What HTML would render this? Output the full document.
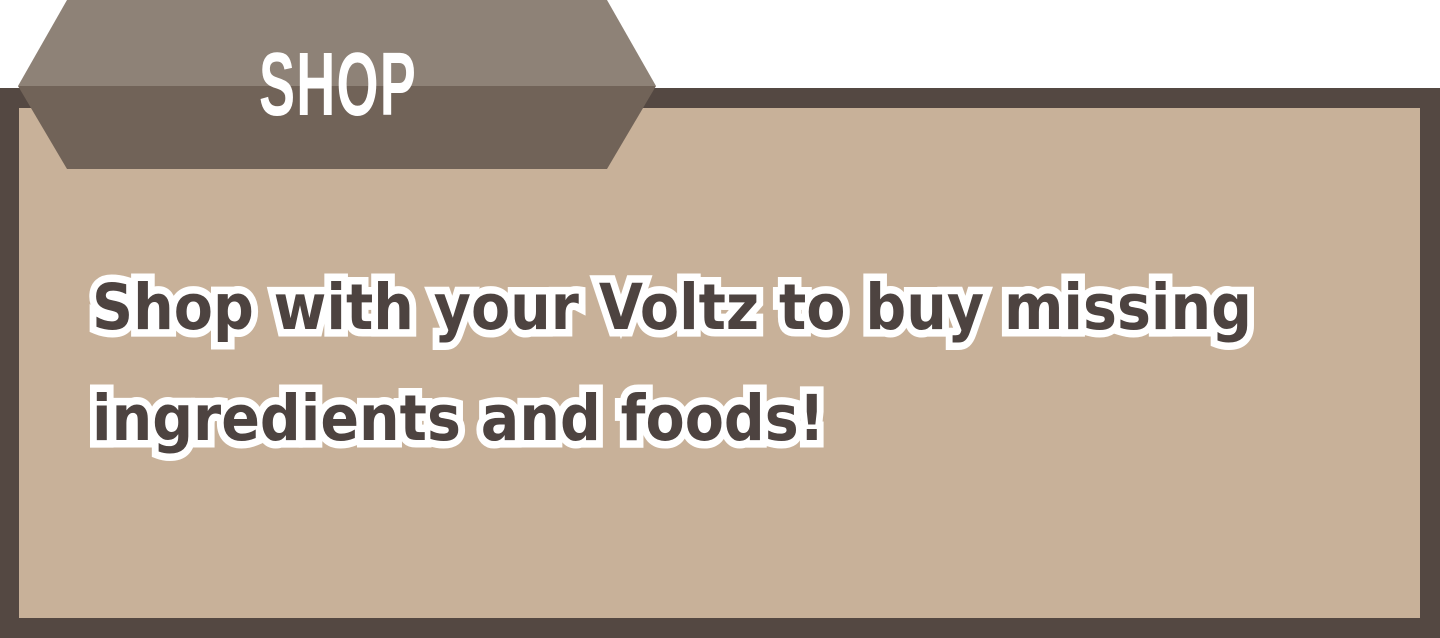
<!DOCTYPE html>
<html><head><style>
html,body{margin:0;padding:0;}
body{width:1440px;height:638px;position:relative;background:#fff;overflow:hidden;font-family:"Liberation Sans",sans-serif;}
.box{position:absolute;left:0;top:88px;width:1440px;height:550px;background:#544842;}
.inner{position:absolute;left:19px;top:108px;width:1401px;height:510px;background:#c8b199;}
svg.tab{position:absolute;left:0;top:0;}
.shop{position:absolute;left:259px;top:40px;width:158px;height:90px;color:#fff;font-size:90px;font-weight:bold;line-height:90px;transform-origin:0 0;white-space:nowrap;letter-spacing:2px;}
.msg{position:absolute;left:92px;top:252px;font-family:"DejaVu Sans","Liberation Sans",sans-serif;font-weight:bold;font-size:63px;line-height:111px;color:#4d4340;white-space:nowrap;}
.msg span{paint-order:stroke fill;-webkit-text-stroke:15px #fff;}
</style></head><body>
<div class="box"></div>
<div class="inner"></div>
<svg class="tab" width="700" height="180">
<polygon points="67,0 607,0 656,86 18,86" fill="#8e8277"/>
<polygon points="18,86 656,86 607,169 67,169" fill="#716358"/>
</svg>
<div class="shop" id="shop">SHOP</div>
<div class="msg"><span>Shop with your Voltz to buy missing</span><br><span>ingredients and foods!</span></div>
<script>
var s=document.getElementById('shop');
s.style.transform='scaleX('+(158/s.scrollWidth)+')';
var m=document.querySelectorAll('.msg span')[0];
var w=m.getBoundingClientRect().width;
document.querySelector('.msg').style.transform='scaleX('+(1160/w)+')';
document.querySelector('.msg').style.transformOrigin='0 0';
</script>
</body></html>
